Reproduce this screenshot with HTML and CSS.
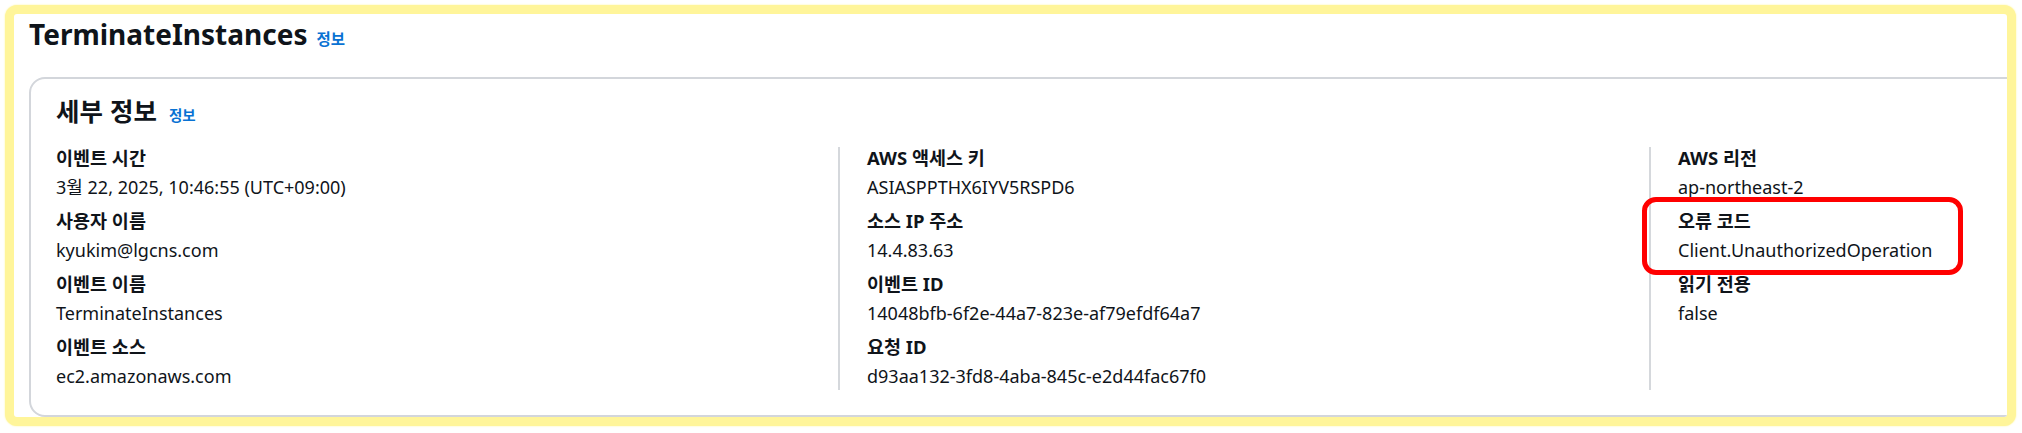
FILE: index.html
```html
<!DOCTYPE html>
<html lang="ko">
<head>
<meta charset="utf-8">
<title>TerminateInstances</title>
<link rel="stylesheet" href="styles.css">
</head>
<body>
<div class="frame">
  <div class="page-header">
    <h1 class="title">TerminateInstances</h1>
    <a class="info info-title" href="#">정보</a>
  </div>
  <section class="card">
    <div class="card-header">
      <h2 class="card-title">세부 정보</h2>
      <a class="info info-card" href="#">정보</a>
    </div>
    <div class="cols">
      <div class="col">
        <div class="pair"><div class="label">이벤트 시간</div><div class="value">3월 22, 2025, 10:46:55 (UTC+09:00)</div></div>
        <div class="pair"><div class="label">사용자 이름</div><div class="value">kyukim@lgcns.com</div></div>
        <div class="pair"><div class="label">이벤트 이름</div><div class="value">TerminateInstances</div></div>
        <div class="pair"><div class="label">이벤트 소스</div><div class="value">ec2.amazonaws.com</div></div>
      </div>
      <div class="col col-sep">
        <div class="pair"><div class="label">AWS 액세스 키</div><div class="value">ASIASPPTHX6IYV5RSPD6</div></div>
        <div class="pair"><div class="label">소스 IP 주소</div><div class="value">14.4.83.63</div></div>
        <div class="pair"><div class="label">이벤트 ID</div><div class="value">14048bfb-6f2e-44a7-823e-af79efdf64a7</div></div>
        <div class="pair"><div class="label">요청 ID</div><div class="value">d93aa132-3fd8-4aba-845c-e2d44fac67f0</div></div>
      </div>
      <div class="col col-sep">
        <div class="pair"><div class="label">AWS 리전</div><div class="value">ap-northeast-2</div></div>
        <div class="pair highlight"><div class="label">오류 코드</div><div class="value">Client.UnauthorizedOperation</div></div>
        <div class="pair"><div class="label">읽기 전용</div><div class="value">false</div></div>
      </div>
    </div>
  </section>
</div>
</body>
</html>
```

FILE: styles.css
```css
* { box-sizing: border-box; }

html, body {
  margin: 0;
  padding: 0;
  background: #ffffff;
}

body {
  font-family: "Noto Sans", "Noto Sans CJK KR", sans-serif;
  color: #0f141a;
}

.frame {
  margin: 5px;
  width: 2011px;
  height: 421px;
  border: 9px solid #fff59a;
  border-radius: 12px;
  box-shadow: 0 0 2px #fff59a;
  overflow: hidden;
  padding: 2px 0 0 15px;
  background: #ffffff;
}

.page-header {
  display: flex;
  align-items: baseline;
  height: 36px;
  margin-bottom: 25px;
}

.title {
  margin: 0;
  font-size: 28px;
  line-height: 36px;
  font-weight: 700;
}

.info {
  color: #0972d3;
  text-decoration: none;
  font-family: "Noto Sans CJK KR", sans-serif;
  font-weight: 700;
}

.info-title {
  margin-left: 9px;
  font-size: 15.5px;
}

.card {
  width: 2010px;
  border: 2px solid #d3d6db;
  border-radius: 16px;
  padding: 15px 25px 25px;
}

.card-header {
  display: flex;
  align-items: baseline;
  height: 32px;
  margin-bottom: 21px;
}

.card-title {
  margin: 0;
  font-family: "Noto Sans CJK KR", sans-serif;
  font-size: 25.5px;
  line-height: 32px;
  font-weight: 700;
}

.info-card {
  margin-left: 12px;
  font-size: 14.5px;
}

.cols {
  display: grid;
  grid-template-columns: 782px 811px 1fr;
}

.col {
  display: flex;
  flex-direction: column;
  gap: 9px;
}

.col-sep {
  border-left: 2px solid #d5d8dc;
  padding-left: 27px;
}

.pair {
  position: relative;
  display: flex;
  flex-direction: column;
  gap: 5px;
}

.label {
  font-weight: 700;
  font-size: 18.5px;
  line-height: 22px;
}

.value {
  font-size: 18px;
  line-height: 27px;
}

.highlight::after {
  content: "";
  position: absolute;
  left: -36px;
  top: -13px;
  width: 311px;
  height: 68px;
  border: 5px solid #ff0000;
  border-radius: 14px;
}
```
